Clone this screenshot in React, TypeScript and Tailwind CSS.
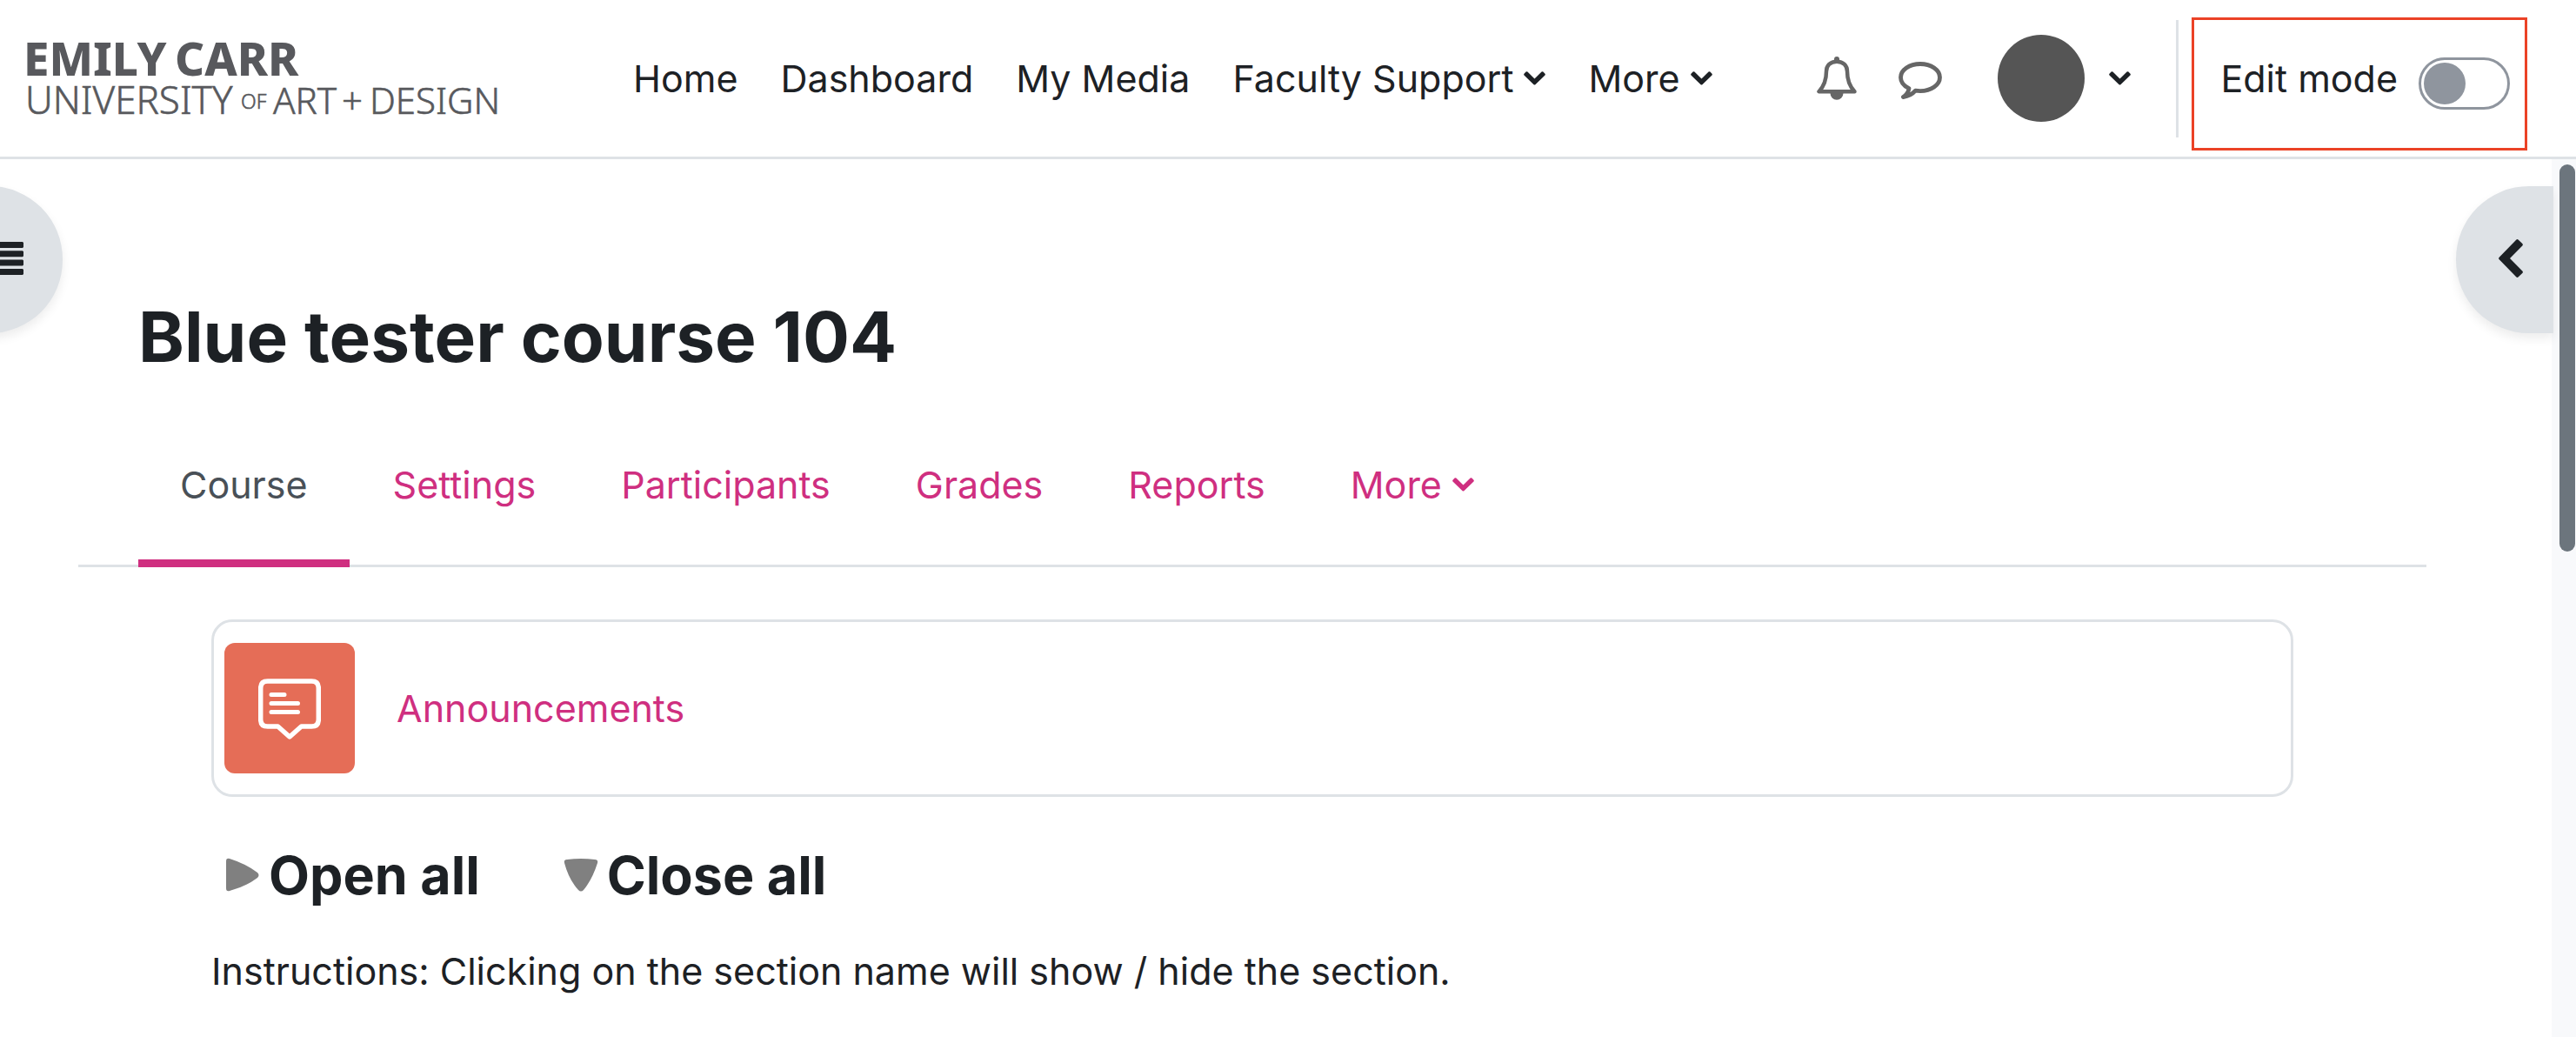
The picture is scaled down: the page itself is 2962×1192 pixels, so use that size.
import { useState } from 'react';

const navItems = [
  { label: 'Home' },
  { label: 'Dashboard' },
  { label: 'My Media' },
  { label: 'Faculty Support', menu: true },
  { label: 'More', menu: true },
];

const tabs = [
  { label: 'Course', active: true },
  { label: 'Settings' },
  { label: 'Participants' },
  { label: 'Grades' },
  { label: 'Reports' },
  { label: 'More', menu: true },
];

export default function App() {
  return (
    <div className="flex min-h-screen flex-col overflow-x-hidden bg-white font-['Inter','Liberation_Sans',sans-serif] text-[43px] leading-[68px] text-[#1d2125]">
      <Header />
      <div className="relative flex flex-1">
        <main className="min-w-0 flex-1 pr-36 pl-[90px]">
          <h1 className="mt-[156px] px-[69px] text-[80px] leading-[96px] font-bold">Blue tester course 104</h1>
          <CourseTabs />
          <CourseContent />
        </main>
        <Scrollbar />
        {/* drawer toggles sit over the page edges */}
        <button
          aria-label="Open course index"
          className="absolute top-[31px] -left-10 flex h-[169px] w-28 items-center rounded-r-[84px] bg-[#dee2e6] pb-1 pl-10 shadow-[0_6px_12px_rgba(0,0,0,0.075)]"
        >
          <ListIcon />
        </button>
        <button
          aria-label="Open block drawer"
          className="absolute top-[31px] right-[26px] flex h-[169px] w-28 items-center rounded-l-[84px] bg-[#dee2e6] pb-1 pl-[49px] shadow-[0_6px_12px_rgba(0,0,0,0.075)]"
        >
          <ChevronLeft />
        </button>
      </div>
    </div>
  );
}

function Header() {
  const [editing, setEditing] = useState(false);

  return (
    <header className="flex h-[183px] items-center border-b-[3px] border-[#dee2e6] pr-14 pl-5">
      <a href="#" aria-label="Emily Carr University of Art + Design" className="shrink-0">
        <Logo />
      </a>
      <nav className="ml-32 flex gap-[49px] whitespace-nowrap">
        {navItems.map(item => (
          <a key={item.label} href="#" className="flex items-center gap-3">
            {item.label}
            {item.menu && <ChevronDown />}
          </a>
        ))}
      </nav>
      <div className="ml-auto flex shrink-0 items-center">
        <button aria-label="Notifications">
          <BellIcon />
        </button>
        <button aria-label="Messages" className="ml-12 pt-1">
          <CommentIcon />
        </button>
        <button aria-label="User menu" className="ml-16 flex items-center gap-7">
          <span className="size-[100px] rounded-full bg-[#555555]" />
          <ChevronDown />
        </button>
        <div className="ml-[52px] h-[135px] w-[3px] bg-[#dee2e6]" />
        <div className="mt-3 ml-[15px] flex h-[153px] items-center border-[3px] border-[#eb4226] pr-[17px] pl-[30px]">
          <label htmlFor="edit-mode" className="pb-3 whitespace-nowrap">Edit mode</label>
          <input
            id="edit-mode"
            type="checkbox"
            checked={editing}
            onChange={e => setEditing(e.target.checked)}
            className="ml-6 flex h-[60px] w-[105px] appearance-none items-center rounded-full border-[3px] border-[#8f959e] px-[3px] before:size-12 before:rounded-full before:bg-[#8f959e] checked:justify-end"
          />
        </div>
      </div>
    </header>
  );
}

function CourseTabs() {
  return (
    <nav className="mt-9 flex gap-[2px] border-b-[3px] border-[#dee2e6] px-[69px]">
      {tabs.map(tab => (
        <a
          key={tab.label}
          href="#"
          className={
            tab.active
              ? '-mb-[3px] flex items-center gap-3 border-b-[9px] border-[#cf2f80] px-12 py-[52px] text-[#495057]'
              : '-mb-[3px] flex items-center gap-3 border-b-[9px] border-transparent px-12 py-[52px] text-[#cf2f80]'
          }
        >
          {tab.label}
          {tab.menu && <ChevronDown />}
        </a>
      ))}
    </nav>
  );
}

function CourseContent() {
  return (
    <section className="px-[153px]">
      <div className="mt-[60px] flex items-center rounded-3xl border-[3px] border-[#dee2e6] px-3 py-6">
        <div className="flex size-[150px] items-center justify-center rounded-xl bg-[#e56d57]">
          <ForumIcon />
        </div>
        <a href="#" className="ml-12 text-[#cf2f80]">Announcements</a>
      </div>
      <div className="mt-[52px] flex gap-24 pl-4 text-[61px] leading-[76px] font-bold">
        <button className="flex items-center gap-[10px]">
          <svg className="h-10 w-10" viewBox="0 0 40 40" fill="#808080">
            <path d="M1 4Q1 0 5 1Q24 7 37 17Q40 20 37 23Q24 33 5 38Q1 39 1 35Z" />
          </svg>
          Open all
        </button>
        <button className="flex items-center gap-[10px]">
          <svg className="h-10 w-10" viewBox="0 0 40 40" fill="#808080">
            <path d="M4 2Q20 0 36 2Q40 2 39 6Q33 25 23 37Q20 40 17 37Q6 25 1 6Q0 2 4 2Z" />
          </svg>
          Close all
        </button>
      </div>
      <p className="mt-[38px]">Instructions: Clicking on the section name will show / hide the section.</p>
    </section>
  );
}

function Scrollbar() {
  return (
    <div className="w-7 shrink-0 bg-[#f8f9fb] pt-[6px] pl-[9px]">
      <div className="h-[445px] w-[18px] rounded-full bg-[#6c757d]" />
    </div>
  );
}

function Logo() {
  return (
    <svg className="h-[130px] w-[580px]" viewBox="0 0 580 130" fill="#58595d" fontFamily="'Noto Sans', sans-serif">
      <g fontSize="53" fontWeight="800">
        <text x="7" y="62">EMILY</text>
        <text x="181" y="62">CARR</text>
      </g>
      <g fontSize="42" fontWeight="300" stroke="#58595d" strokeWidth="0.6">
        <text x="9" y="106" fontSize="44">UNIVERSITY</text>
        <text x="257" y="100" fontSize="23">OF</text>
        <text x="294" y="106">ART</text>
        <text x="373" y="106">+</text>
        <text x="405" y="106">DESIGN</text>
      </g>
    </svg>
  );
}

function ChevronDown() {
  return (
    <svg className="h-4 w-[25px] shrink-0" viewBox="0 0 25 16" fill="currentColor">
      <path d="M2.6.5Q3.5-.2 4.4.6L12.5 8.4L20.6.6Q21.5-.2 22.4.5L24.5 2.7Q25.2 3.6 24.5 4.5L13.4 15.2Q12.5 16 11.6 15.2L.5 4.5Q-.2 3.6.5 2.7Z" />
    </svg>
  );
}

function ChevronLeft() {
  return (
    <svg className="h-11 w-7" viewBox="0 0 28 44" fill="currentColor">
      <path d="M20.2.7Q21.5-.5 22.8.7L27.3 5Q28.5 6.3 27.3 7.5L13 22L27.3 36.5Q28.5 37.7 27.3 39L22.8 43.3Q21.5 44.5 20.2 43.3L.7 23.3Q-.5 22 .7 20.7Z" />
    </svg>
  );
}

function ListIcon() {
  return (
    <svg className="h-[38px] w-[27px]" viewBox="0 0 27 38" fill="currentColor">
      <path d="M0 0H26L27 1V6L26 7H0ZM0 10.3H26L27 11.3V16.3L26 17.3H0ZM0 20.6H26L27 21.6V26.6L26 27.6H0ZM0 31H26L27 32V37L26 38H0Z" />
    </svg>
  );
}

function BellIcon() {
  return (
    <svg className="h-[50px] w-[46px]" viewBox="0 0 46 50" fill="none" stroke="#666666" strokeWidth="4.5" strokeLinejoin="round">
      <path d="M23 5.7C15.5 5.7 11 10.5 11 17C11 27 8.5 34 2.5 40.2H43.5C37.5 34 35 27 35 17C35 10.5 30.5 5.7 23 5.7Z" />
      <path d="M20 6V3A3 3 0 0 1 26 3V6Z" fill="#666666" stroke="none" />
      <path d="M15.5 42A7.5 7.8 0 0 0 30.5 42Z" fill="#666666" stroke="none" />
    </svg>
  );
}

function CommentIcon() {
  return (
    <svg className="h-[43px] w-[50px]" viewBox="0 0 50 43" fill="none" stroke="#666666" strokeWidth="4.8" strokeLinejoin="round">
      <path d="M25 2.5C12.5 2.5 2.5 9.5 2.5 18C2.5 23.2 6 27.7 12 30.7C11.5 34.5 9.5 37.5 5.5 40.5C11.5 39.7 16 37.2 19.5 33.2C21.3 33.5 23.1 33.6 25 33.6C37.5 33.6 47.5 26.6 47.5 18C47.5 9.5 37.5 2.5 25 2.5Z" />
    </svg>
  );
}

function ForumIcon() {
  return (
    <svg className="h-[72px] w-[72px]" viewBox="0 0 72 72" fill="none" stroke="#ffffff" strokeWidth="5.5" strokeLinejoin="round" strokeLinecap="round">
      <path d="M10.7 5H61.3Q69.3 5 69.3 13V49Q69.3 57 61.3 57H49.5L36 69L22.5 57H10.7Q2.7 57 2.7 49V13Q2.7 5 10.7 5Z" />
      <path d="M15 20.5H30M15 30.5H45.5M15 40.5H45.5" strokeWidth="5" />
    </svg>
  );
}
